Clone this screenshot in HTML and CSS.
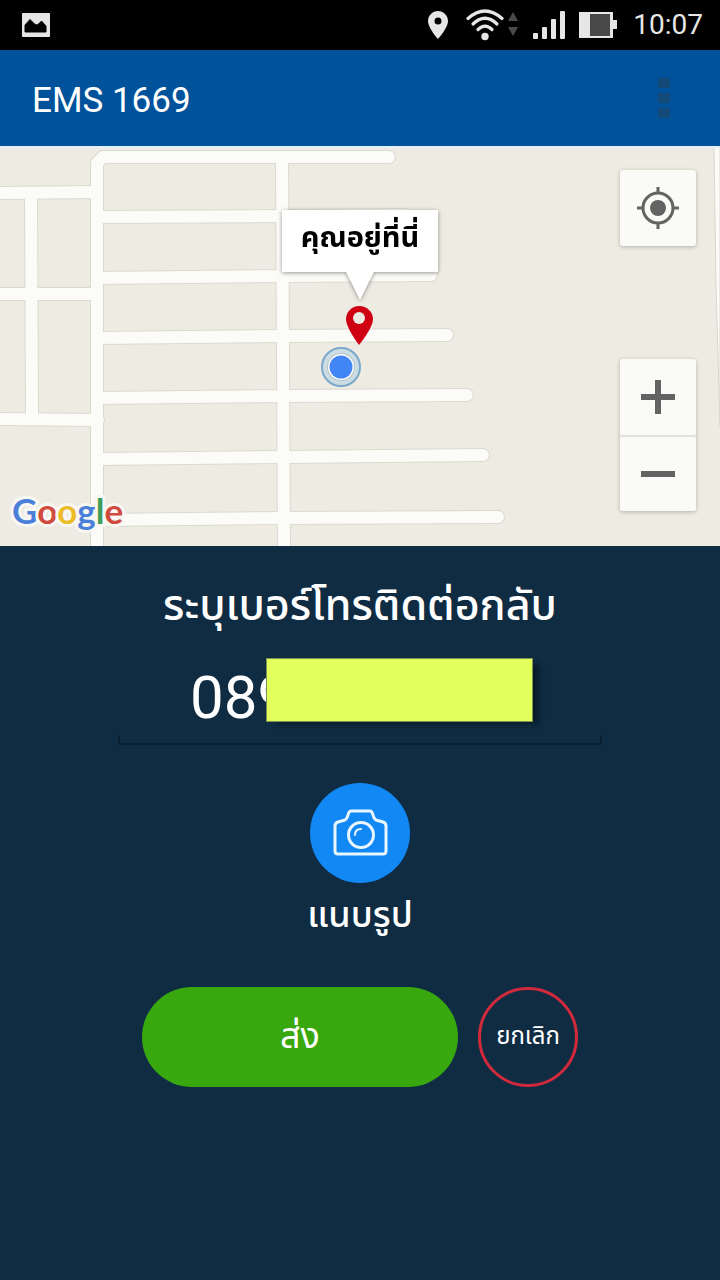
FILE: index.html
```html
<!DOCTYPE html>
<html lang="th">

<head>
  <meta charset="UTF-8">
  <meta name="viewport" content="width=device-width, initial-scale=1">
  <title>EMS 1669</title>
  <link rel="stylesheet" href="styles.css">
</head>

<body>
  <div class="status-bar">
    <svg class="icon-picture" width="30" height="24" viewBox="0 0 30 24">
      <rect x="1" width="28" height="24" rx="1" fill="#e6e6e6" />
      <path d="M4 19V12L9 6.500Q14 12 16 12Q18 11 20.500 8L25 13V19Z" fill="#000" stroke="#000" stroke-linejoin="round" />
    </svg>
    <div class="status-icons">
      <svg width="20" height="28" viewBox="0 0 20 28">
        <path fill="#e6e6e6" fill-rule="evenodd" d="M10 0C4.500 0 0 4.500 0 10C0 17 10 28 10 28S20 17 20 10C20 4.500 15.500 0 10 0ZM10 6.500A3.500 3.500 0 1 1 10 13.500A3.500 3.500 0 1 1 10 6.500Z" />
      </svg>
      <svg class="icon-wifi" width="54" height="32" viewBox="0 0 54 32">
        <g fill="none" stroke="#e6e6e6" stroke-width="3.200" stroke-linecap="round">
          <path d="M3 9.500Q20 -5.500 37 9.500" />
          <path d="M8 15Q20 3.500 32 15" />
          <path d="M13 20.500Q20 13.500 27 20.500" />
        </g>
        <circle cx="20" cy="27.500" r="3.700" fill="#e6e6e6" />
        <path d="M48 3L53 12H43ZM43 18H53L48 27Z" fill="#4a4a4a" />
      </svg>
      <svg width="33" height="28" viewBox="0 0 33 28" fill="#e6e6e6">
        <rect y="22" width="5" height="6" rx="1" />
        <rect x="9" y="16" width="5" height="12" rx="1" />
        <rect x="18" y="8" width="5" height="20" rx="1" />
        <rect x="27" width="5" height="28" rx="1" />
      </svg>
      <svg class="icon-battery" width="38" height="26" viewBox="0 0 38 26">
        <path d="M0 0H34V8H38V17H34V26H0Z" fill="#e6e6e6" />
        <rect x="11" y="2" width="20" height="22" fill="#484848" />
      </svg>
      <span class="clock">10:07</span>
    </div>
  </div>

  <header class="app-bar">
    <h1>EMS 1669</h1>
    <button class="menu" aria-label="Menu"><i></i><i></i><i></i></button>
  </header>

  <section class="map">
    <svg class="map-tiles" viewBox="0 0 720 400" preserveAspectRatio="xMidYMid slice">
      <defs>
        <g id="roads" fill="none">
          <path d="M97 400L97 17L103 11H389" />
          <path d="M282 11L284 408" />
          <path d="M97 71L282 70L405 69" />
          <path d="M97 132L282 130L431 129" />
          <path d="M98 192L283 190L447 189" />
          <path d="M98 252L283 250L467 249" />
          <path d="M98 313L284 311L483 309" />
          <path d="M98 374L284 372L498 371" />
          <path d="M-8 47L97 46" />
          <path d="M-8 148H97" />
          <path d="M-8 273L98 274" />
          <path d="M31 47L32 273" />
        </g>
      </defs>
      <rect width="720" height="400" fill="#eeebe3" />
      <path d="M714 0L716 140L720 280V0Z" fill="#fbfbf7" stroke="#d9d6cd" />
      <use href="#roads" stroke="#dcd9d0" stroke-width="14" stroke-linecap="round" stroke-linejoin="round" />
      <use href="#roads" stroke="#fbfbf7" stroke-width="12" stroke-linecap="round" stroke-linejoin="round" />
      <rect width="720" height="2" fill="#e0f1f9" />

      <circle cx="341" cy="221" r="19" fill="#cbdde2" stroke="#7ba7c9" stroke-width="2" />
      <circle cx="341" cy="221" r="14" fill="#b5c3c9" />
      <circle cx="341" cy="221" r="13" fill="#fff" />
      <circle cx="341" cy="221" r="11.500" fill="#4285f4" />

      <path fill="#cf0012" d="M359 160C352 160 346 166 346 173C346 182 359 199 359 199S373 182 373 173C373 166 367 160 359 160Z" />
      <circle cx="359" cy="172" r="6" fill="#eeebe3" />
    </svg>

    <div class="callout">คุณอยู่ที่นี่</div>

    <div class="google"><span class="blue">G</span><span class="red">o</span><span class="yellow">o</span><span class="blue">g</span><span class="green">l</span><span class="red">e</span></div>

    <div class="map-controls">
      <button class="map-button" aria-label="My location">
        <svg width="42" height="42" viewBox="0 0 42 42" stroke="#636363" stroke-width="3" fill="none">
          <circle cx="21" cy="21" r="15" />
          <path d="M21 0V6M21 36V42M0 21H6M36 21H42" />
          <circle cx="21" cy="21" r="8" fill="#636363" stroke="none" />
        </svg>
      </button>
      <div class="zoom">
        <button class="map-button" aria-label="Zoom in">
          <svg width="34" height="34" viewBox="0 0 34 34" stroke="#636363" stroke-width="6">
            <path d="M17 0V34M0 17H34" />
          </svg>
        </button>
        <button class="map-button" aria-label="Zoom out">
          <svg width="34" height="34" viewBox="0 0 34 34" stroke="#636363" stroke-width="6">
            <path d="M0 17H34" />
          </svg>
        </button>
      </div>
    </div>
  </section>

  <form class="contact">
    <label class="contact-label" for="phone">ระบุเบอร์โทรติดต่อกลับ</label>
    <div class="phone">
      <input type="tel" id="phone" value="089">
      <div class="phone-cover"></div>
    </div>

    <button type="button" class="attach">
      <span class="attach-icon">
        <svg width="56" height="48" viewBox="0 0 56 48" fill="none" stroke="#e9f6ff" stroke-width="3" stroke-linejoin="round" stroke-linecap="round">
          <path d="M6 13L13 11Q15 10 16 6Q17 2 19 2H38Q40 2 41 6Q42 10 44 11L51 13Q54 14 54 17V42Q54 45 51 45H6Q3 45 3 42V17Q3 14 6 13Z" />
          <circle cx="29" cy="26" r="12.500" />
          <path d="M23 26Q23 20 29 20" stroke-width="2" />
        </svg>
      </span>
      แนบรูป
    </button>

    <div class="actions">
      <button type="button" class="send">ส่ง</button>
      <button type="button" class="cancel">ยกเลิก</button>
    </div>
  </form>
</body>

</html>
```
FILE: styles.css
```css
* {
  box-sizing: border-box;
}

body {
  margin: 0;
  min-height: 100vh;
  background: #0f2c43;
  color: white;
  font-family: Roboto, 'Noto Sans Thai', 'Noto Sans', sans-serif;
}

button,
input {
  margin: 0;
  padding: 0;
  border: 0;
  background: none;
  color: inherit;
  font-family: inherit;
}

svg {
  display: block;
}

.status-bar {
  display: flex;
  align-items: center;
  justify-content: space-between;
  height: 50px;
  padding: 0 17px 0 21px;
  background: black;
}

.status-icons {
  display: flex;
  align-items: center;
}

.icon-wifi {
  margin: 0 14px 0 17px;
}

.icon-battery {
  margin: 0 16px 0 13px;
}

.clock {
  color: #e6e6e6;
  font-size: 28px;
  line-height: 32px;
}

.app-bar {
  display: flex;
  align-items: center;
  justify-content: space-between;
  height: 96px;
  padding: 0 50px 0 32px;
  background: #00529b;
}

.app-bar h1 {
  margin: 0;
  padding-top: 4px;
  font-size: 35px;
  font-weight: 400;
}

.menu {
  display: flex;
  flex-direction: column;
  gap: 5px;
}

.menu i {
  width: 12px;
  height: 10px;
  background: #144a78;
}

.map {
  position: relative;
  height: 400px;
  overflow: hidden;
  background: #eeebe3;
}

.map-tiles {
  width: 100%;
  height: 100%;
}

.callout {
  position: absolute;
  top: 64px;
  left: 50%;
  width: 156px;
  height: 62px;
  transform: translateX(-50%);
  background: white;
  color: black;
  font-size: 29px;
  font-weight: 700;
  line-height: 54px;
  text-align: center;
  filter: drop-shadow(0 1px 2px rgba(0, 0, 0, 0.4));
}

.callout::after {
  content: '';
  position: absolute;
  top: 100%;
  left: 50%;
  margin-left: -14px;
  border: 14px solid transparent;
  border-top: 28px solid white;
  border-bottom: 0;
}

.google {
  position: absolute;
  left: 12px;
  bottom: 14px;
  font-family: Lato, sans-serif;
  font-size: 35px;
  font-weight: 700;
  line-height: 44px;
  -webkit-text-stroke: 6px #f8f7f3;
  paint-order: stroke fill;
}

.blue {
  color: #4a80d9;
}

.red {
  color: #d04a3d;
}

.yellow {
  color: #ecbc28;
}

.green {
  color: #3f9e57;
}

.map-controls {
  position: absolute;
  top: 24px;
  right: 24px;
  bottom: 35px;
  display: flex;
  flex-direction: column;
  justify-content: space-between;
}

.map-button {
  display: flex;
  align-items: center;
  justify-content: center;
  width: 76px;
  height: 76px;
  border-radius: 3px;
  background: #fafaf6;
  box-shadow: 0 1px 4px rgba(0, 0, 0, 0.25);
}

.zoom {
  border-radius: 3px;
  box-shadow: 0 1px 4px rgba(0, 0, 0, 0.25);
}

.zoom .map-button {
  box-shadow: none;
}

.zoom .map-button:last-child {
  border-top: 2px solid #e3e2de;
}

.contact {
  display: flex;
  flex-direction: column;
  align-items: center;
  padding: 24px 16px;
}

.contact-label {
  font-size: 43px;
  font-weight: 500;
  line-height: 70px;
}

.phone {
  position: relative;
  width: 100%;
  max-width: 484px;
  margin-top: 16px;
}

.phone input {
  display: block;
  width: 100%;
  height: 87px;
  padding: 0 0 4px 72px;
  outline: 0;
  font-size: 60px;
}

/* field underline with the short ends turned up */
.phone::after {
  content: '';
  display: block;
  height: 8px;
  margin-top: -8px;
  border: 2px solid #0a2031;
  border-top: 0;
}

.phone-cover {
  position: absolute;
  top: 2px;
  left: 148px;
  width: 267px;
  height: 64px;
  border: 1px solid #7d9150;
  background: #e2ff5c;
  box-shadow: 8px 4px 6px -2px rgba(0, 0, 0, 0.4);
}

.attach {
  display: flex;
  flex-direction: column;
  align-items: center;
  margin-top: 38px;
  font-size: 36px;
  font-weight: 500;
  line-height: 64px;
}

.attach-icon {
  display: flex;
  align-items: center;
  justify-content: center;
  width: 100px;
  height: 100px;
  border-radius: 50%;
  background: #1188f3;
}

.actions {
  display: flex;
  justify-content: center;
  gap: 20px;
  width: 100%;
  margin-top: 40px;
}

.send {
  flex: 0 1 316px;
  height: 100px;
  border-radius: 50px;
  background: #39a80e;
  font-size: 36px;
}

.cancel {
  flex: none;
  width: 100px;
  height: 100px;
  border: 3px solid #d02a3c;
  border-radius: 50%;
  font-size: 24px;
}
```
